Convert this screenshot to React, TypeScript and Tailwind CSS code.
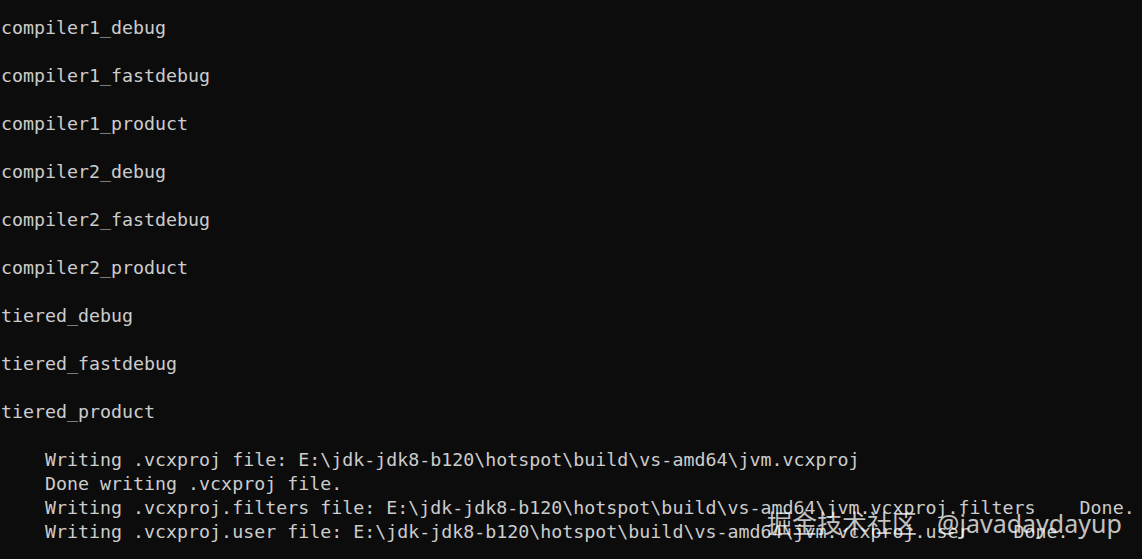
const lines = [
  'compiler1_debug',
  '',
  'compiler1_fastdebug',
  '',
  'compiler1_product',
  '',
  'compiler2_debug',
  '',
  'compiler2_fastdebug',
  '',
  'compiler2_product',
  '',
  'tiered_debug',
  '',
  'tiered_fastdebug',
  '',
  'tiered_product',
  '',
  '    Writing .vcxproj file: E:\\jdk-jdk8-b120\\hotspot\\build\\vs-amd64\\jvm.vcxproj',
  '    Done writing .vcxproj file.',
  '    Writing .vcxproj.filters file: E:\\jdk-jdk8-b120\\hotspot\\build\\vs-amd64\\jvm.vcxproj.filters    Done.',
  '    Writing .vcxproj.user file: E:\\jdk-jdk8-b120\\hotspot\\build\\vs-amd64\\jvm.vcxproj.user    Done.',
];

export default function App() {
  return (
    <div className="relative w-[1142px] h-[559px] overflow-hidden bg-[#0c0c0c]">
      {/* console output */}
      <div className="pt-[16px] pl-px font-['DejaVu_Sans_Mono',monospace] text-[18.3px] leading-[24px] text-[#cccccc]">
        {lines.map((line, i) => (
          <div key={i} className="h-[24px] whitespace-pre">
            {line}
          </div>
        ))}
      </div>

      {/* watermark */}
      <div className="absolute left-[767px] top-[506px] flex items-baseline whitespace-pre font-['Noto_Sans','Noto_Sans_CJK_SC',sans-serif] text-[25px] leading-[34px] text-white/75">
        <span>掘金技术社区</span>
        <span className="ml-[20px]">@javadaydayup</span>
      </div>
    </div>
  );
}
